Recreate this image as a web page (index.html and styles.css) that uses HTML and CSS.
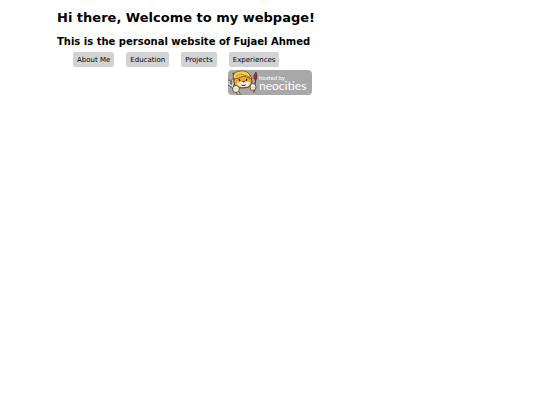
FILE: index.html
```
<!DOCTYPE html>
<html lang="en">

<head>
    <meta charset="UTF-8">
    <meta name="viewport" content="width=device-width, initial-scale=1.0">
    <title>Fujael Ahmed</title>
    <link rel="stylesheet" href="styles.css">
</head>

<body>
    <div class="container">
        <h1>Hi there, Welcome to my webpage!</h1>
        <h2>This is the personal website of Fujael Ahmed</h2>

        <nav class="menu">
            <button type="button">About Me</button>
            <button type="button">Education</button>
            <button type="button">Projects</button>
            <button type="button">Experiences</button>
        </nav>

        <a class="hosted" href="https://neocities.org">
            <!-- cat with a wrench and a paintbrush -->
            <svg class="cat" viewBox="0 0 30 25" aria-hidden="true">
                <path d="M1 11v3l3 2 7 8M5 10v4l-1 2" fill="none" stroke="#40454b" stroke-width="3" stroke-linecap="round" />
                <path d="M1 11v3l3 2 7 8M5 10v4l-1 2" fill="none" stroke="#d4dade" stroke-width="1.6" stroke-linecap="round" />
                <path d="M28 7l-2 15" fill="none" stroke="#6b3030" stroke-width="1.3" stroke-linecap="round" />
                <path d="M28 2q2 4 0 8l-2-1q-1-4 2-7z" fill="#a3303a" stroke="#44272a" stroke-width=".6" />
                <path d="M6 9L5 3l5 1q6-3 12 1l2 6q0 7-9 7-9 0-9-6z" fill="#f5a13a" stroke="#382719" stroke-width=".8" />
                <path d="M5 6q1-4 7-5 7-1 10 4l2 4-8-3-6 2-4 1z" fill="#f5cf45" stroke="#6c481d" stroke-width=".8" />
                <path d="M8 6l5-2 9 3" fill="none" stroke="#a37324" stroke-width=".7" />
                <path d="M9 13q4-2 6-1 4-1 7 0 0 5-6 5-6 0-7-4z" fill="#fff3df" />
                <path d="M11 9l1 2M19 9l-1 2" stroke="#241c19" stroke-width="1.3" />
                <path d="M14 11h3l-1 2zM13 14q2 2 5 0l-1 2h-3z" fill="#7c2924" />
                <ellipse cx="8" cy="19" rx="3.4" ry="3.4" fill="#fff8e9" stroke="#4a3523" stroke-width=".8" />
                <ellipse cx="25" cy="17" rx="3" ry="3.4" fill="#fff8e9" stroke="#4a3523" stroke-width=".8" />
                <path d="M7 18v2M9 18v2M24 16v2M26 16v2" stroke="#b88b52" stroke-width=".5" />
            </svg>
            <span class="hosted-text">
                <span class="hosted-by">hosted by</span>
                <span class="hosted-name">neocities</span>
            </span>
        </a>
    </div>
</body>

</html>
```

FILE: styles.css
```
body {
    margin: 0;
    background-color: #ffffff;
    color: #000000;
    font-family: Verdana, "DejaVu Sans", sans-serif;
}

.container {
    display: flex;
    flex-direction: column;
    padding: 9px 57px;
}

h1 {
    margin: 0;
    font-size: 13px;
    line-height: 18px;
}

h2 {
    margin: 8px 0 0;
    font-size: 10px;
    line-height: 13px;
}

.menu {
    display: flex;
    gap: 12px;
    margin-top: 4px;
    padding-left: 16px;
}

.menu button {
    border: none;
    border-radius: 2px;
    padding: 4px 4px 3px;
    background-color: #d3d3d3;
    color: #000000;
    font-family: inherit;
    font-size: 7px;
    line-height: 8px;
    cursor: pointer;
}

.menu button:hover {
    background-color: #bbbbbb;
}

.hosted {
    display: flex;
    align-self: flex-start;
    margin: 3px 0 0 171px;
    padding-right: 6px;
    border-radius: 4px;
    background-color: #a8a8a8;
    color: #ffffff;
    text-decoration: none;
}

.cat {
    width: 30px;
    height: 25px;
}

.hosted-text {
    display: flex;
    flex-direction: column;
    padding: 4px 0 0 1px;
    font-family: Lato, sans-serif;
}

.hosted-by {
    font-size: 6px;
    line-height: 7px;
}

.hosted-name {
    font-size: 12px;
    line-height: 10px;
}
```
